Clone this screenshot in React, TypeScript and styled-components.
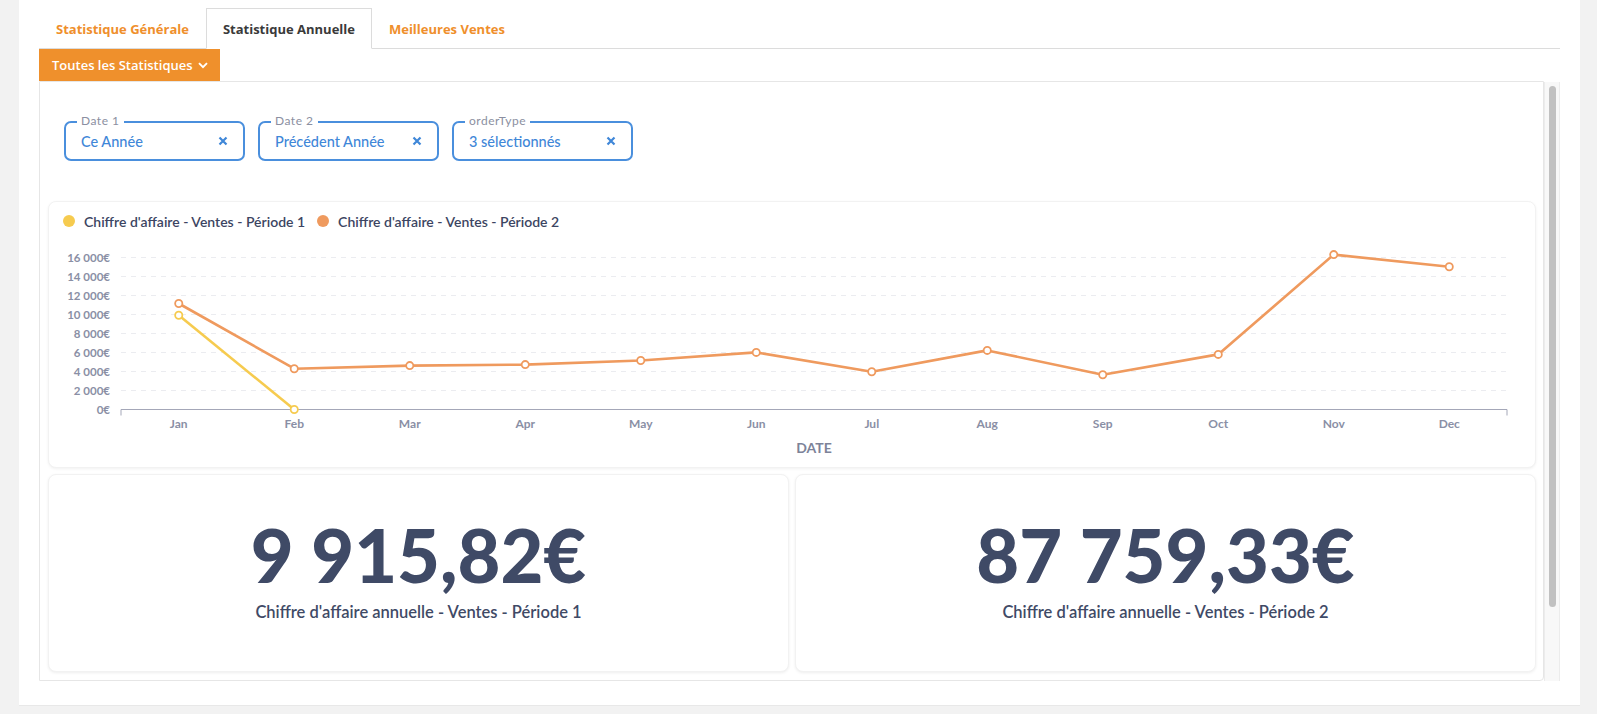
import React from 'react';
import styled, { createGlobalStyle } from 'styled-components';

const GlobalStyle = createGlobalStyle`
  html, body {
    margin: 0;
    padding: 0;
    background: #f2f2f2;
  }

  body {
    font-family: Lato, 'Open Sans', sans-serif;
  }

  * {
    box-sizing: border-box;
  }
`;

const Page = styled.div`
  min-height: 714px;
  padding: 0 17px 0 19px;
`;

const Sheet = styled.div`
  height: 706px;
  background: #fff;
  padding: 8px 20px 0 20px;
  border-bottom: 1px solid #e8e8e8;
`;

const TabBar = styled.div`
  display: flex;
  height: 41px;
  border-bottom: 1px solid #dcdcdc;
`;

const Tab = styled.div<{ $active?: boolean }>`
  display: flex;
  align-items: center;
  height: 41px;
  padding: 0 16px;
  font-family: 'Open Sans', sans-serif;
  font-size: 13px;
  font-weight: 700;
  color: ${p => (p.$active ? '#3a3a3a' : '#ef8f2c')};
  background: ${p => (p.$active ? '#fff' : 'transparent')};
  border: 1px solid ${p => (p.$active ? '#dcdcdc' : 'transparent')};
  border-bottom-color: ${p => (p.$active ? '#fff' : 'transparent')};
  margin-bottom: -1px;
  cursor: pointer;
`;

const MenuButton = styled.button`
  display: flex;
  align-items: center;
  gap: 5px;
  height: 32px;
  padding: 0 12px 0 13px;
  border: none;
  background: #ef902c;
  color: #fff;
  font-family: 'Open Sans', sans-serif;
  font-size: 13px;
  font-weight: 600;
  white-space: nowrap;
  cursor: pointer;
`;

const Viewport = styled.div`
  display: flex;
  height: 600px;
`;

const Panel = styled.div`
  flex: 1;
  overflow: hidden;
  border: 1px solid #e6e6e6;
  border-radius: 0 0 4px 0;
  padding: 39px 7px 9px 8px;
`;

const ScrollTrack = styled.div`
  display: flex;
  flex-direction: column;
  width: 16px;
  margin-top: 1px;
  padding: 4px 3px 0 4px;
  background: #f8f8f8;
  border-left: 1px solid #ececec;
  border-right: 1px solid #ececec;
`;

const ScrollThumb = styled.div`
  height: 521px;
  border-radius: 4px;
  background: #c1c1c1;
`;

const Filters = styled.div`
  display: flex;
  gap: 13px;
  margin-left: 16px;
`;

const FilterBox = styled.div`
  position: relative;
  display: flex;
  align-items: center;
  justify-content: space-between;
  width: 181px;
  height: 40px;
  padding: 0 15px 0 15px;
  border: 2px solid #4a8fdd;
  border-radius: 7px;
`;

const FilterLabel = styled.span`
  position: absolute;
  top: -9px;
  left: 11px;
  padding: 0 4px;
  background: #fff;
  font-size: 12px;
  line-height: 14px;
  letter-spacing: 0.5px;
  color: #8b8fa1;
`;

const FilterValue = styled.span`
  font-size: 14.5px;
  font-weight: 500;
  color: #3f87d8;
`;

const ClearIcon = styled.svg`
  width: 10px;
  height: 10px;
  cursor: pointer;
`;

const ChartCard = styled.div`
  margin-top: 40px;
  height: 267px;
  background: #fff;
  border: 1px solid #f2f2f2;
  border-radius: 8px;
  box-shadow: 0 1px 3px rgba(0, 0, 0, 0.06);
  padding-top: 11px;
`;

const Legend = styled.div`
  display: flex;
  align-items: center;
  height: 16px;
  padding-left: 14px;
  gap: 12px;
`;

const LegendItem = styled.div`
  display: flex;
  align-items: center;
  gap: 9px;
  font-size: 14px;
  font-weight: 600;
  color: #3c4562;
`;

const Dot = styled.span<{ $color: string }>`
  width: 12px;
  height: 12px;
  border-radius: 50%;
  background: ${p => p.$color};
`;

const ChartSvg = styled.svg`
  display: block;
  width: 1486px;
  height: 238px;
`;

const StatGrid = styled.div`
  display: grid;
  grid-template-columns: 1fr 1fr;
  gap: 6px;
  margin-top: 6px;
`;

const StatCard = styled.div`
  display: flex;
  flex-direction: column;
  align-items: center;
  height: 198px;
  padding-top: 43px;
  background: #fff;
  border: 1px solid #f2f2f2;
  border-radius: 8px;
  box-shadow: 0 1px 3px rgba(0, 0, 0, 0.07);
`;

const StatValue = styled.div`
  font-size: 74px;
  line-height: 74px;
  font-weight: 900;
  color: #3f4a66;
`;

const StatCaption = styled.div`
  margin-top: 10px;
  font-size: 16.5px;
  line-height: 20px;
  font-weight: 600;
  color: #3f4a66;
`;

const YELLOW = '#f6cb4f';
const ORANGE = '#ef9a5e';

const months = ['Jan', 'Feb', 'Mar', 'Apr', 'May', 'Jun', 'Jul', 'Aug', 'Sep', 'Oct', 'Nov', 'Dec'];
const period1 = [9915.82, 0];
const period2 = [11158, 4295, 4621, 4726, 5158, 6010, 3968, 6221, 3652, 5800, 16305, 15021];

const filters = [
  { label: 'Date 1', value: 'Ce Année' },
  { label: 'Date 2', value: 'Précédent Année' },
  { label: 'orderType', value: '3 sélectionnés' }
];

const stats = [
  { value: '9 915,82€', caption: "Chiffre d'affaire annuelle - Ventes - Période 1" },
  { value: '87 759,33€', caption: "Chiffre d'affaire annuelle - Ventes - Période 2" }
];

// plot geometry, in svg units
const LEFT = 72;
const RIGHT = 1458;
const BAND = (RIGHT - LEFT) / 12;
const BASE = 180.5;
const K = 19 / 2000;

const px = (i: number) => LEFT + BAND * (i + 0.5);
const py = (v: number) => BASE - v * K;

const fmt = (v: number) => (v === 0 ? '0€' : `${v / 1000} 000€`);

function Series({ data, color }: { data: number[]; color: string }) {
  const points = data.map((v, i) => `${px(i)},${py(v)}`).join(' ');
  return (
    <g>
      <polyline points={points} fill='none' stroke={color} strokeWidth={2.6} strokeLinejoin='round' />
      {data.map((v, i) => (
        <circle key={i} cx={px(i)} cy={py(v)} r={3.6} fill='#fff' stroke={color} strokeWidth={1.8} />
      ))}
    </g>
  );
}

function LineChart() {
  const ticks = [0, 2000, 4000, 6000, 8000, 10000, 12000, 14000, 16000];

  return (
    <ChartSvg viewBox='0 0 1486 238'>
      {ticks.map(t => (
        <g key={t}>
          {t > 0 && (
            <line x1={LEFT} x2={RIGHT} y1={py(t)} y2={py(t)} stroke='#ebecf0' strokeDasharray='5 5' />
          )}
          <text
            x={61}
            y={py(t) + 4}
            textAnchor='end'
            fontFamily='Lato'
            fontWeight={700}
            fontSize={11.5}
            fill='#8a8fa5'
          >
            {fmt(t)}
          </text>
        </g>
      ))}

      <path
        d={`M${LEFT} ${BASE + 6} V${BASE} H${RIGHT} V${BASE + 6}`}
        fill='none'
        stroke='#a4a7b8'
        strokeWidth={1}
      />

      {months.map((m, i) => (
        <text
          key={m}
          x={px(i)}
          y={BASE + 18}
          textAnchor='middle'
          fontFamily='Lato'
          fontWeight={700}
          fontSize={12}
          fill='#8a8fa5'
        >
          {m}
        </text>
      ))}

      <text
        x={(LEFT + RIGHT) / 2}
        y={BASE + 43}
        textAnchor='middle'
        fontFamily='Lato'
        fontWeight={700}
        fontSize={14}
        fill='#7d8399'
      >
        DATE
      </text>

      <Series data={period2} color={ORANGE} />
      <Series data={period1} color={YELLOW} />
    </ChartSvg>
  );
}

export default function App() {
  return (
    <>
      <GlobalStyle />
      <Page>
        <Sheet>
          <TabBar>
            <Tab>Statistique Générale</Tab>
            <Tab $active>Statistique Annuelle</Tab>
            <Tab>Meilleures Ventes</Tab>
          </TabBar>

          <MenuButton>
            Toutes les Statistiques
            <svg width='10' height='7' viewBox='0 0 10 7'>
              <path d='M1 1.2l4 4 4-4' fill='none' stroke='#fff' strokeWidth='1.9' />
            </svg>
          </MenuButton>

          <Viewport>
            <Panel>
              <Filters>
                {filters.map(f => (
                  <FilterBox key={f.label}>
                    <FilterLabel>{f.label}</FilterLabel>
                    <FilterValue>{f.value}</FilterValue>
                    <ClearIcon viewBox='0 0 10 10'>
                      <path d='M1.5 1.5l7 7M8.5 1.5l-7 7' stroke='#3f87d8' strokeWidth='2.2' />
                    </ClearIcon>
                  </FilterBox>
                ))}
              </Filters>

              <ChartCard>
                <Legend>
                  <LegendItem>
                    <Dot $color={YELLOW} />
                    Chiffre d'affaire - Ventes - Période 1
                  </LegendItem>
                  <LegendItem>
                    <Dot $color={ORANGE} />
                    Chiffre d'affaire - Ventes - Période 2
                  </LegendItem>
                </Legend>
                <LineChart />
              </ChartCard>

              <StatGrid>
                {stats.map(s => (
                  <StatCard key={s.caption}>
                    <StatValue>{s.value}</StatValue>
                    <StatCaption>{s.caption}</StatCaption>
                  </StatCard>
                ))}
              </StatGrid>
            </Panel>
            <ScrollTrack>
              <ScrollThumb />
            </ScrollTrack>
          </Viewport>
        </Sheet>
      </Page>
    </>
  );
}
